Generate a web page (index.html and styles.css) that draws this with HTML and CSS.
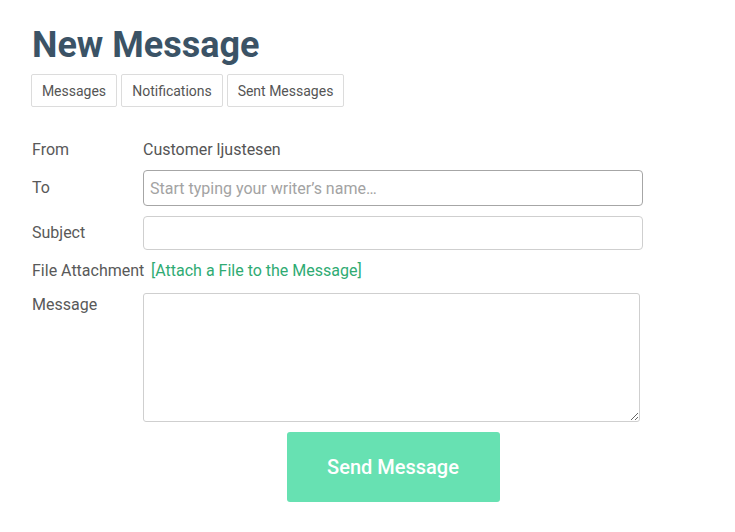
FILE: index.html
```html
<!DOCTYPE html>
<html>
<head>
<meta charset="utf-8">
<link rel="stylesheet" href="styles.css">
</head>
<body>
<div class="page">
  <h1 class="title">New Message</h1>
  <div class="tabs">
    <a class="tab">Messages</a>
    <a class="tab">Notifications</a>
    <a class="tab">Sent Messages</a>
  </div>
  <form class="form">
    <div class="row row-from">
      <div class="label">From</div>
      <div class="value">Customer ljustesen</div>
    </div>
    <div class="row row-to">
      <div class="label">To</div>
      <input class="input input-focus" type="text" placeholder="Start typing your writer’s name…">
    </div>
    <div class="row row-subject">
      <div class="label">Subject</div>
      <input class="input input-subject" type="text">
    </div>
    <div class="row row-file">
      <div class="label">File Attachment</div>
      <a class="attach">[Attach a File to the Message]</a>
    </div>
    <div class="row row-message">
      <div class="label">Message</div>
      <textarea class="textarea"></textarea>
    </div>
    <div class="row row-submit">
      <div class="label"></div>
      <div class="submit-wrap"><button type="button" class="send">Send Message</button></div>
    </div>
  </form>
</div>
</body>
</html>
```
FILE: styles.css
```css
* { box-sizing: border-box; }
html, body { margin: 0; padding: 0; background: #fff; }
body { font-family: Roboto, "Noto Sans", "Liberation Sans", sans-serif; color: #555; }
.page { padding: 24px 0 0 31px; }
.title {
  margin: 0 0 0 1px;
  font-size: 36px;
  line-height: 43px;
  font-weight: 700;
  color: #3b5366;
}
.tabs { display: flex; gap: 4px; margin-top: 7px; }
.tab {
  display: block;
  border: 1px solid #dcdcdc;
  border-radius: 2px;
  padding: 7px 0 5px;
  font-size: 14px;
  line-height: 19px;
  color: #555;
  background: #fff;
  text-align: center;
  white-space: nowrap;
}
.tab:nth-child(1) { width: 86px; }
.tab:nth-child(2) { width: 102px; }
.tab:nth-child(3) { width: 117px; }
.form { margin-top: 30px; padding-left: 1px; }
.row { display: flex; align-items: center; }
.label { width: 111px; flex: none; font-size: 16px; line-height: 24px; color: #595959; }
.value { font-size: 16px; line-height: 24px; color: #555; }
.row-from { padding-top: 1px; }
.row-to { margin-top: 8px; }
.row-subject { margin-top: 10px; }
.row-file { margin-top: 9px; }
.row-message { margin-top: 10px; align-items: flex-start; }
.row-submit { margin-top: 10px; }
.row-file .label { width: 119px; }
.input {
  width: 500px;
  height: 36px;
  border: 1px solid #cfcfcf;
  border-radius: 4px;
  padding: 0 6px;
  font-family: inherit;
  font-size: 16px;
  color: #555;
  outline: none;
  background: #fff;
}
.input-focus { border-color: #a6a6a6; }
.input-subject { height: 34px; }
.input::placeholder { color: #a3a3a3; }
.attach { font-size: 16px; line-height: 24px; color: #2fab73; }
.textarea {
  width: 497px;
  height: 129px;
  border: 1px solid #cfcfcf;
  border-radius: 3px;
  resize: vertical;
  outline: none;
  font-family: inherit;
  margin: 0;
}
.submit-wrap { width: 500px; display: flex; justify-content: center; }
.send {
  width: 213px;
  height: 70px;
  border: 0;
  border-radius: 3px;
  background: #67e1b2;
  color: #fff;
  font-family: inherit;
  font-size: 20px;
  font-weight: 500;
}
```
